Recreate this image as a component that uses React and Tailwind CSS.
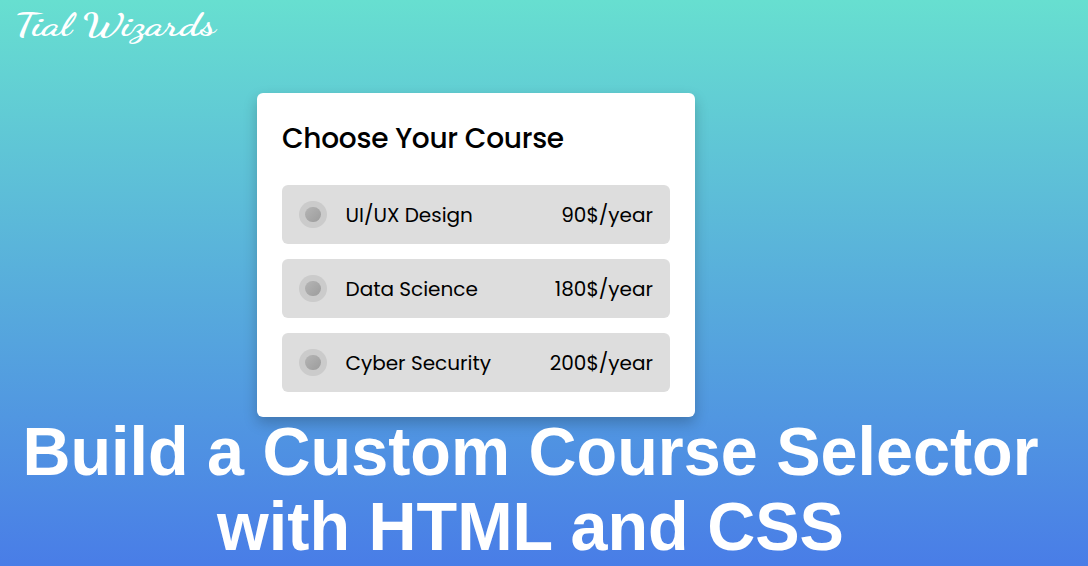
import React, { useState } from 'react';

const courses = [
  { id: 'uiux', name: 'UI/UX Design', price: '90$/year' },
  { id: 'data', name: 'Data Science', price: '180$/year' },
  { id: 'cyber', name: 'Cyber Security', price: '200$/year' },
];

const CourseOption = ({ course, selected, onSelect }) => {
  return (
    <label className="flex items-center h-[59px] px-[17px] rounded-md bg-[#ddd] cursor-pointer">
      <input
        type="radio"
        name="course"
        className="sr-only"
        checked={selected}
        onChange={() => onSelect(course.id)}
      />
      <span className="flex items-center justify-center w-7 h-[27px] rounded-full bg-[#cbcbcb]">
        <span
          className={`w-4 h-[15px] rounded-full bg-linear-to-br ${
            selected ? 'from-[#68e0cf] to-[#4a7ee8]' : 'from-[#b5b5b5] to-[#9c9c9c]'
          }`}
        />
      </span>
      <span className="ml-[18.5px] pt-px text-xl">{course.name}</span>
      <span className="ml-auto pt-px text-xl">{course.price}</span>
    </label>
  );
};

const App = () => {
  const [selected, setSelected] = useState(null);

  return (
    <div className="flex flex-col w-[1088px] h-[566px] overflow-hidden bg-linear-to-b/srgb from-[#67dfd0] to-[#497de7]">
      <header className="h-[93px] shrink-0 pl-[14px] pt-[5px]">
        <span className="inline-block text-[31px] leading-10 font-bold text-white whitespace-nowrap origin-left scale-x-[1.36] font-['Lucida_Handwriting','Dancing_Script',cursive]">
          Tial Wizards
        </span>
      </header>

      <section className="w-[438px] h-[324px] shrink-0 ml-[257px] px-[25px] pt-[25px] rounded-md bg-white text-black shadow-[0_6px_14px_rgba(0,0,0,0.22)] font-['Poppins','Inter',sans-serif]">
        <h2 className="h-[67px] text-[28px] leading-[42px] font-medium tracking-[-0.27px] whitespace-nowrap">Choose Your Course</h2>
        <div className="flex flex-col gap-[15px]">
          {courses.map((course) => (
            <CourseOption
              key={course.id}
              course={course}
              selected={selected === course.id}
              onSelect={setSelected}
            />
          ))}
        </div>
      </section>

      <h1 className="w-[1061px] shrink-0 -mt-[3px] text-center text-[66.5px] leading-[72px] font-bold text-white whitespace-nowrap origin-top scale-y-[1.04] font-['Liberation_Sans',Arial,sans-serif]">
        Build a Custom Course Selector
        <br />
        with HTML and CSS
      </h1>
    </div>
  );
};

export default App;
